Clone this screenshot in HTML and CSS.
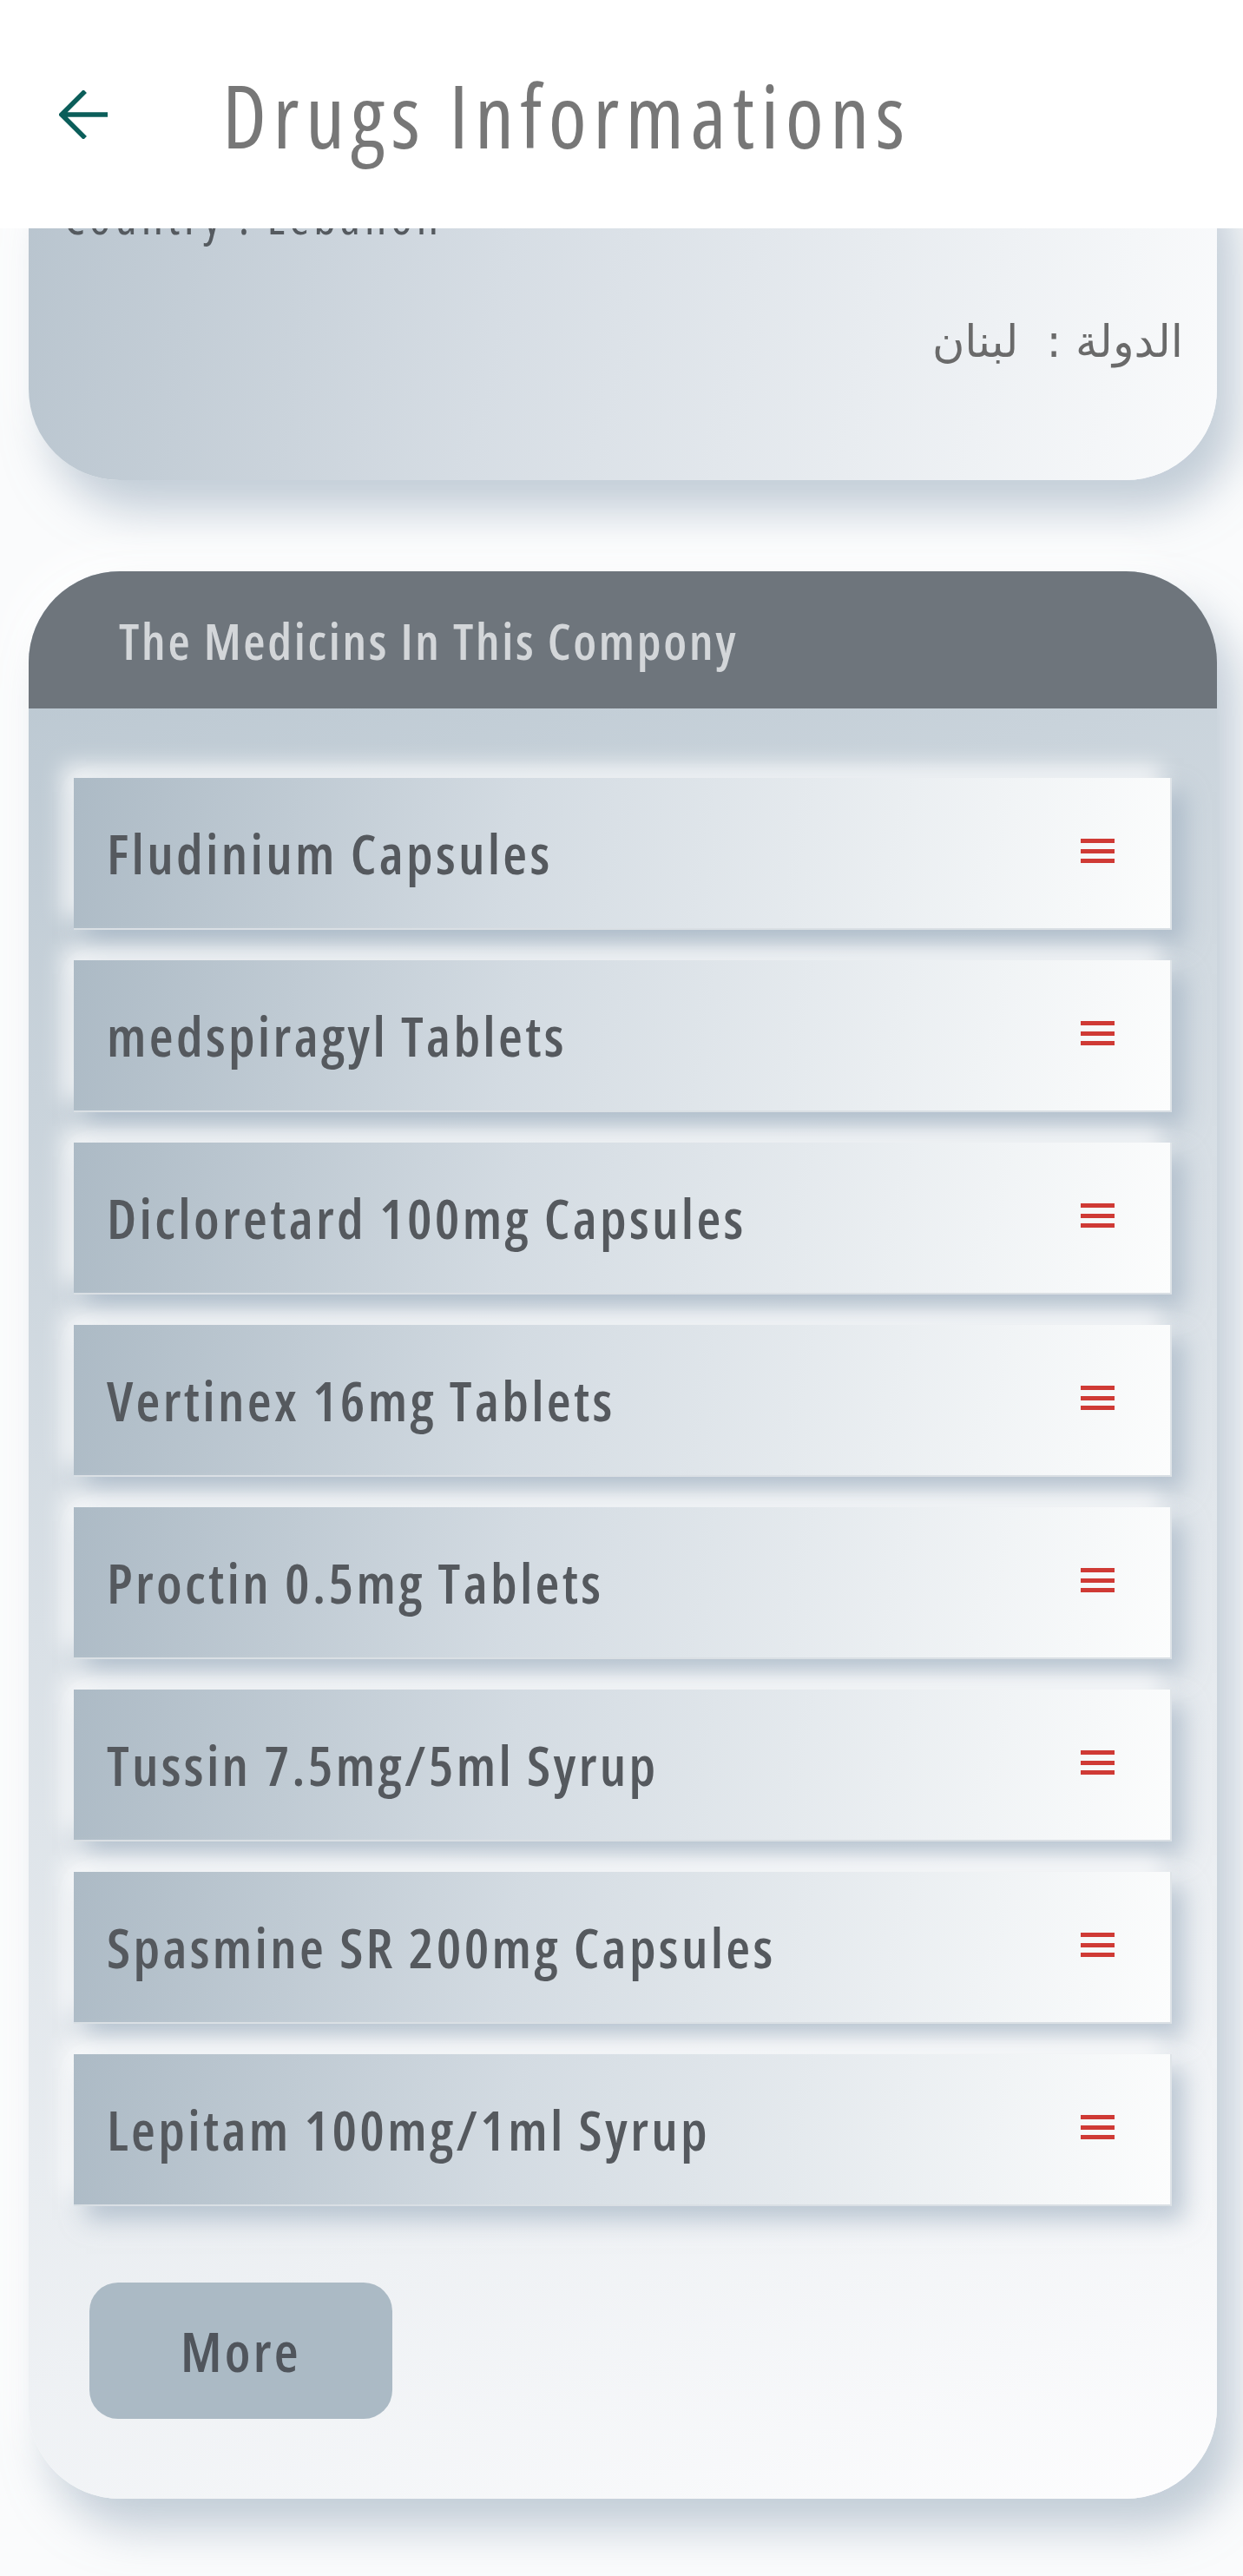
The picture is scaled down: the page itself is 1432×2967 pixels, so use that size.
FILE: index.html
```html
<!DOCTYPE html>
<html lang="en">
<head>
<meta charset="utf-8">
<title>Drugs Informations</title>
<link rel="stylesheet" href="styles.css">
</head>
<body>
<header class="appbar">
  <svg class="back" width="56" height="56" viewBox="0 0 56 56" aria-hidden="true">
    <path d="M56 28 H3 M30 1 L3 28 L30 55" fill="none" stroke="#0b5e5a" stroke-width="5.5" stroke-linecap="butt" stroke-linejoin="miter"/>
  </svg>
  <h1 class="title">Drugs Informations</h1>
</header>

<main class="content">
  <section class="card info-card">
    <p class="country-en">Country : Lebanon</p>
    <p class="country-ar" dir="rtl">الدولة :  لبنان</p>
  </section>

  <section class="card list-card">
    <div class="list-head">The Medicins In This Compony</div>
    <div class="list-body">
      <ul class="items">
        <li class="item"><span class="item-name">Fludinium Capsules</span><svg class="menu" width="39" height="28" viewBox="0 0 39 28"><rect y="0" width="39" height="5"/><rect y="12" width="39" height="5"/><rect y="23" width="39" height="5"/></svg></li>
        <li class="item"><span class="item-name">medspiragyl Tablets</span><svg class="menu" width="39" height="28" viewBox="0 0 39 28"><rect y="0" width="39" height="5"/><rect y="12" width="39" height="5"/><rect y="23" width="39" height="5"/></svg></li>
        <li class="item"><span class="item-name">Dicloretard 100mg Capsules</span><svg class="menu" width="39" height="28" viewBox="0 0 39 28"><rect y="0" width="39" height="5"/><rect y="12" width="39" height="5"/><rect y="23" width="39" height="5"/></svg></li>
        <li class="item"><span class="item-name">Vertinex 16mg Tablets</span><svg class="menu" width="39" height="28" viewBox="0 0 39 28"><rect y="0" width="39" height="5"/><rect y="12" width="39" height="5"/><rect y="23" width="39" height="5"/></svg></li>
        <li class="item"><span class="item-name">Proctin 0.5mg Tablets</span><svg class="menu" width="39" height="28" viewBox="0 0 39 28"><rect y="0" width="39" height="5"/><rect y="12" width="39" height="5"/><rect y="23" width="39" height="5"/></svg></li>
        <li class="item"><span class="item-name">Tussin 7.5mg/5ml Syrup</span><svg class="menu" width="39" height="28" viewBox="0 0 39 28"><rect y="0" width="39" height="5"/><rect y="12" width="39" height="5"/><rect y="23" width="39" height="5"/></svg></li>
        <li class="item"><span class="item-name">Spasmine SR 200mg Capsules</span><svg class="menu" width="39" height="28" viewBox="0 0 39 28"><rect y="0" width="39" height="5"/><rect y="12" width="39" height="5"/><rect y="23" width="39" height="5"/></svg></li>
        <li class="item"><span class="item-name">Lepitam 100mg/1ml Syrup</span><svg class="menu" width="39" height="28" viewBox="0 0 39 28"><rect y="0" width="39" height="5"/><rect y="12" width="39" height="5"/><rect y="23" width="39" height="5"/></svg></li>
      </ul>
      <button class="more" type="button">More</button>
    </div>
  </section>
</main>
</body>
</html>
```

FILE: styles.css
```css
* { box-sizing: border-box; }

html, body {
  margin: 0;
  padding: 0;
}

body {
  background: #fafbfc;
  font-family: "Open Sans", "Noto Sans", sans-serif;
  height: 2967px;
  overflow: hidden;
}

.appbar {
  position: fixed;
  top: 0;
  left: 0;
  right: 0;
  height: 263px;
  background: #ffffff;
  z-index: 10;
  display: flex;
  align-items: center;
  padding-left: 68px;
}

.back { flex: none; display: block; }

.title {
  margin: 0 0 0 132px;
  font-family: "Open Sans", sans-serif;
  font-stretch: 75%;
  font-weight: 500;
  font-size: 100px;
  letter-spacing: 7.4px;
  line-height: 1;
  color: #777777;
}

.content {
  padding: 0 30px 0 33px;
}

.card {
  border-radius: 105px;
  box-shadow: 22px 34px 50px rgba(150, 168, 186, 0.55), -18px -18px 40px rgba(255, 255, 255, 0.9);
}

.info-card {
  margin-top: 150px;
  padding: 68px 39px 127px 40px;
  background: linear-gradient(100deg, #b8c4ce 0%, #d6dde4 40%, #fafbfc 100%);
}

.country-en {
  margin: 0;
  font-family: "Open Sans", sans-serif;
  font-stretch: 75%;
  font-weight: 500;
  font-size: 56px;
  letter-spacing: 5px;
  line-height: 60px;
  color: #555a5f;
}

.country-ar {
  margin: 84px 0 0 0;
  font-family: "DejaVu Sans", sans-serif;
  font-size: 51px;
  line-height: 64px;
  color: #6a6a6a;
  text-align: right;
  white-space: pre;
}

.list-card {
  margin-top: 105px;
  background: linear-gradient(160deg, #b9c6d0 0%, #d9e0e6 45%, #fdfdfe 100%);
  overflow: hidden;
}

.list-head {
  height: 158px;
  background: #6e757c;
  display: flex;
  align-items: center;
  padding-left: 104px;
  font-family: "Open Sans", sans-serif;
  font-stretch: 75%;
  font-weight: 600;
  font-size: 58px;
  letter-spacing: 2.7px;
  color: #d3d6d9;
}

.list-body {
  padding: 80px 52px 92px 52px;
}

.items {
  list-style: none;
  margin: 0;
  padding: 0;
  display: flex;
  flex-direction: column;
  gap: 35px;
}

.item {
  height: 175px;
  display: flex;
  align-items: center;
  justify-content: space-between;
  padding: 0 64px 0 38px;
  background: linear-gradient(100deg, #acbac5 0%, #d3dbe2 40%, #fcfdfd 100%);
  border-right: 2px solid #dfe4e8;
  border-bottom: 2px solid #d9dfe4;
  box-shadow: 14px 16px 26px rgba(150, 168, 186, 0.6), -12px -14px 24px rgba(255, 255, 255, 0.85);
}

.item-name {
  font-family: "Open Sans", sans-serif;
  font-stretch: 75%;
  font-weight: 650;
  font-size: 64px;
  letter-spacing: 3.3px;
  color: #55595e;
}

.menu { flex: none; display: block; fill: #cf3a35; margin-top: -6px; }

.more {
  display: flex;
  align-items: center;
  justify-content: center;
  margin: 88px 0 0 18px;
  width: 349px;
  height: 157px;
  border: none;
  border-radius: 33px;
  background: #abbac5;
  font-family: "Open Sans", sans-serif;
  font-stretch: 75%;
  font-weight: 650;
  font-size: 64px;
  letter-spacing: 3.3px;
  color: #50555c;
  padding: 0;
}
```
